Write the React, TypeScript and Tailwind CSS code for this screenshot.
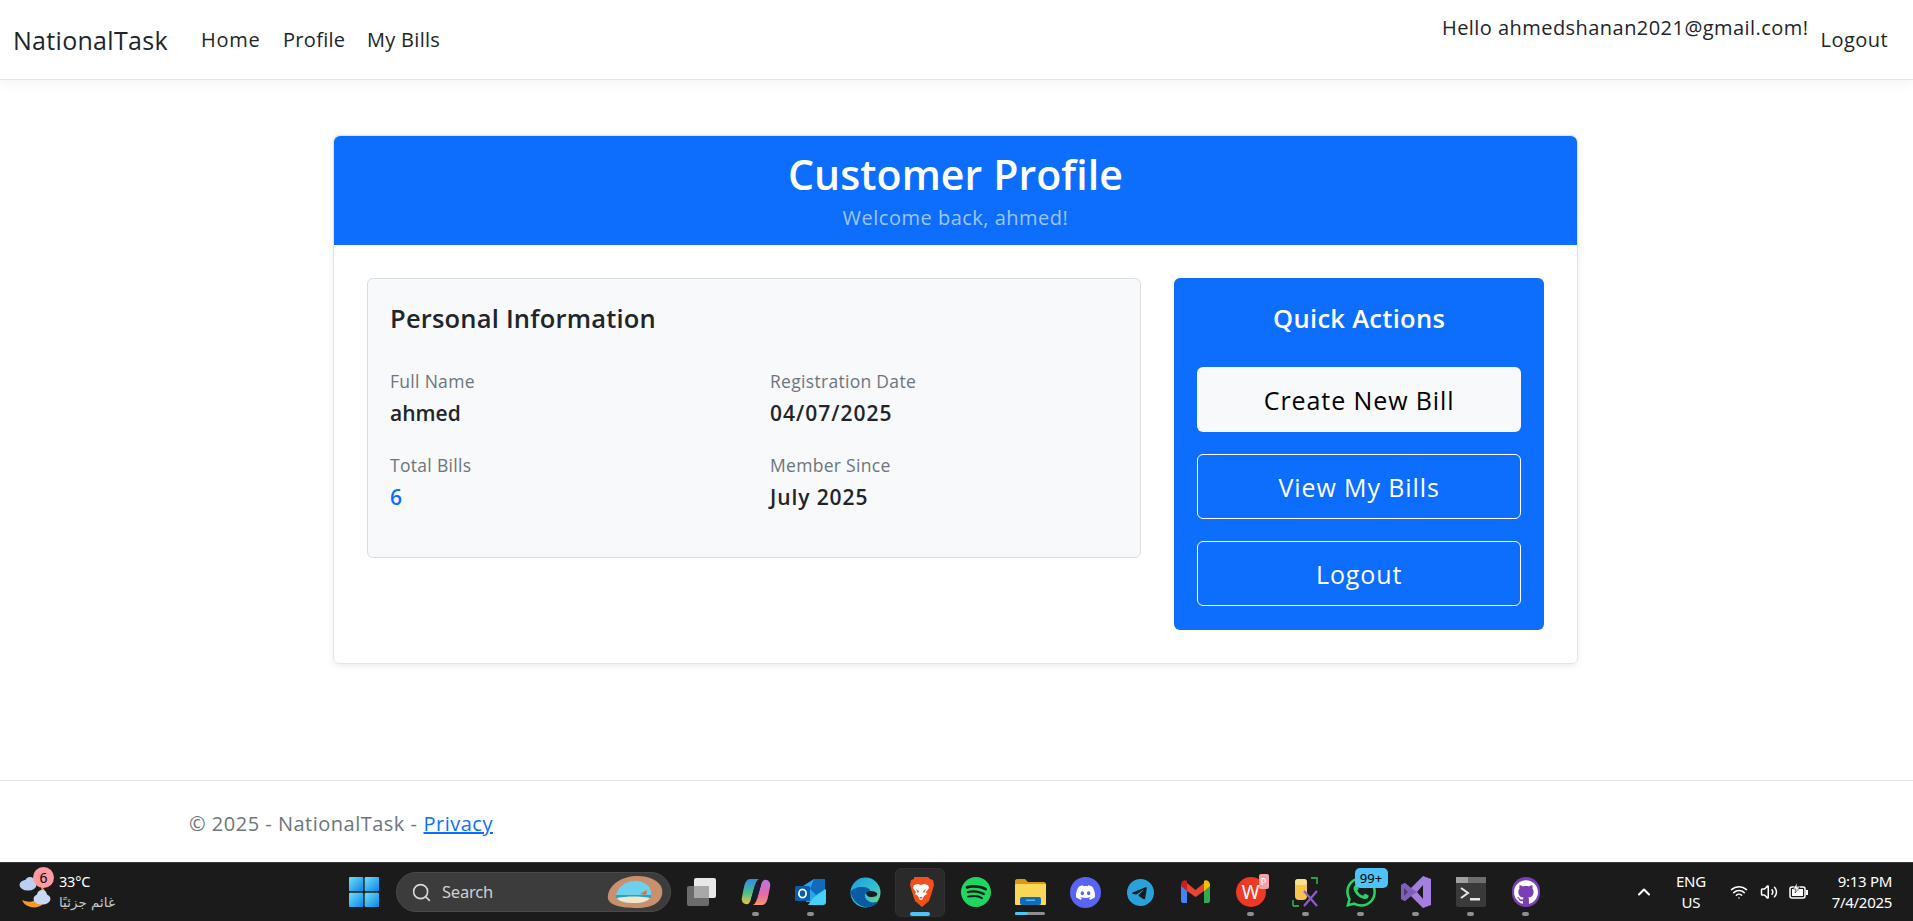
import { SiDiscord, SiGithub, SiSpotify, SiTelegram, SiWhatsapp } from "react-icons/si";
import { ChevronUp, Search, Volume2, Wifi } from "lucide-react";
import type { ReactNode } from "react";

function TaskIcon({ children, dot, active }: { children: ReactNode; dot?: boolean; active?: boolean }) {
  return (
    <div className="relative flex h-[49px] w-[55px] shrink-0 items-center justify-center">
      {active && <span className="absolute inset-y-0 left-[2px] w-[50px] rounded-md border border-[#303030] bg-[#2a2a2a]" />}
      <span className="relative flex items-center justify-center">{children}</span>
      {dot && <span className="absolute bottom-[1px] left-[24px] h-[4px] w-[7px] rounded-full bg-[#8f8f8f]" />}
      {active && <span className="absolute bottom-[1px] left-[17px] h-[4px] w-[20px] rounded-full bg-[#4fc3f7]" />}
    </div>
  );
}

function WindowsLogo() {
  return (
    <svg width="30" height="30" viewBox="0 0 30 30">
      <defs>
        <linearGradient id="win" x1="0" y1="0" x2="1" y2="1">
          <stop offset="0" stopColor="#6fe0f5" />
          <stop offset="1" stopColor="#0a84e8" />
        </linearGradient>
      </defs>
      <rect x="0" y="0" width="14.3" height="14.3" rx="1" fill="url(#win)" />
      <rect x="15.7" y="0" width="14.3" height="14.3" rx="1" fill="url(#win)" />
      <rect x="0" y="15.7" width="14.3" height="14.3" rx="1" fill="url(#win)" />
      <rect x="15.7" y="15.7" width="14.3" height="14.3" rx="1" fill="url(#win)" />
    </svg>
  );
}

function WeatherIcon() {
  return (
    <svg width="34" height="36" viewBox="0 0 34 36">
      <path d="M22 12c6 5 7 12 3 17-4 5-12 6-18 2-2-1-3-3-4-5 7 3 13 2 17-3 2-3 3-7 2-11z" fill="#f59a23" />
      <ellipse cx="9" cy="11" rx="8.500" ry="5.500" fill="#b9d0f2" />
      <circle cx="11" cy="8" r="5" fill="#b9d0f2" />
      <ellipse cx="23" cy="25" rx="8.500" ry="5.500" fill="#c7d9f5" />
      <circle cx="23" cy="21" r="5" fill="#c7d9f5" />
    </svg>
  );
}

function BeachImage() {
  return (
    <svg width="60" height="34" viewBox="0 0 60 34">
      <path d="M4 20C6 9 18 1 34 1c10 0 22 4 24 13 2 10-6 19-24 19C16 33 2 30 4 20z" fill="#c8906c" />
      <path d="M12 21C13 12 22 5 33 6c9 1 15 6 14 14-1 6-8 8-17 8-9 0-18-1-18-7z" fill="#6dd0ee" />
      <path d="M12 20h35v3H12z" fill="#27a3c4" />
      <path d="M13 23c10-2 24-2 33 0-3 4-9 5-16 5s-14-1-17-5z" fill="#f2e6c8" />
      <path d="M36 19l7-4-1 5z" fill="#e0703a" />
    </svg>
  );
}

function TaskView() {
  return (
    <svg width="30" height="30" viewBox="0 0 30 30">
      <rect x="8" y="1" width="22" height="20" rx="2" fill="#e8e8e8" />
      <rect x="1" y="9" width="22" height="20" rx="2" fill="#6b6b6b" />
      <rect x="8" y="9" width="15" height="12" fill="#a8a8a8" />
    </svg>
  );
}

function Copilot() {
  return (
    <svg width="30" height="28" viewBox="0 0 30 28">
      <defs>
        <linearGradient id="cpa" x1="0" y1="0" x2="0" y2="1">
          <stop offset="0" stopColor="#2f8bea" />
          <stop offset="0.55" stopColor="#4cc08a" />
          <stop offset="1" stopColor="#f5c33b" />
        </linearGradient>
        <linearGradient id="cpb" x1="0" y1="0" x2="0" y2="1">
          <stop offset="0" stopColor="#b675e8" />
          <stop offset="0.6" stopColor="#e86aa6" />
          <stop offset="1" stopColor="#f79a5c" />
        </linearGradient>
      </defs>
      <path d="M9 1h9c-2 1-3 3-4 6L10 21c-1 4-3 6-5 5-3 0-5-3-4-7l2-10c1-5 3-8 6-8z" fill="url(#cpa)" />
      <path d="M21 27h-9c2-1 3-3 4-6l4-14c1-4 3-6 5-5 3 0 5 3 4 7l-2 10c-1 5-3 8-6 8z" fill="url(#cpb)" />
      <path d="M14 7h6l-4 14h-6z" fill="#17203a" opacity="0.75" />
    </svg>
  );
}

function Outlook() {
  return (
    <svg width="31" height="28" viewBox="0 0 31 28">
      <path d="M8 8l11-7h11v19c0 2-1 4-4 4H11z" fill="#2aa6e8" />
      <path d="M19 1h11v10l-9 6-6-6z" fill="#0f6cbd" />
      <path d="M13 27h15c2 0 3-1 3-3V11L18 20z" fill="#47d2f5" />
      <rect x="0" y="8" width="15" height="15" rx="1.5" fill="#0a5cb0" />
      <ellipse cx="7.5" cy="15.5" rx="3.6" ry="4.2" fill="none" stroke="#fff" strokeWidth="1.8" />
    </svg>
  );
}

function Edge() {
  return (
    <svg width="31" height="31" viewBox="0 0 31 31">
      <defs>
        <linearGradient id="edgeTop" x1="0" y1="0" x2="1" y2="1">
          <stop offset="0" stopColor="#1b9de2" />
          <stop offset="0.6" stopColor="#35c1d0" />
          <stop offset="1" stopColor="#7ee05f" />
        </linearGradient>
      </defs>
      <circle cx="15.5" cy="15.5" r="15" fill="url(#edgeTop)" />
      <path d="M.5 15C2 22 8 30 17 30c5 0 9-2 12-6-4 2-9 2-12-1-2-2-3-5-1-7 1-1 3-1 5-1-1-4-5-5-9-5-5 0-10 2-11.500 5z" fill="#0c59a4" />
      <path d="M16 16c3-3 8-2 11 0 1 3-2 4-6 4-3 0-5-2-5-4z" fill="#1a1a1a" />
    </svg>
  );
}

function BraveLogo() {
  return (
    <svg width="26" height="30" viewBox="0 0 26 30">
      <path d="M6 0h14l2 2 3 1 1 5-2 7-3 9-7 6-7-6-3-9-2-7 1-5 3-1z" fill="#f1511b" />
      <path d="M6 8l4-1 3 1 3-1 4 1 1 3-3 4 1 2-3 2-2 4h-2l-2-4-3-2 1-2-3-4z" fill="#fff" />
      <path d="M8 12l3 2-1 2zM18 12l-3 2 1 2zM11 20h4l-2 2z" fill="#f1511b" />
    </svg>
  );
}

function Folder() {
  return (
    <svg width="31" height="28" viewBox="0 0 31 28">
      <path d="M0 3c0-1 1-2 2-2h8l3 3h16c1 0 2 1 2 2v3H0z" fill="#d99a12" />
      <rect x="0" y="6" width="31" height="21" rx="1" fill="#fbd757" />
      <rect x="5" y="19" width="21" height="8" rx="2" fill="#0f6cbd" />
      <rect x="11" y="21.500" width="9" height="1.500" fill="#5fb2ee" />
    </svg>
  );
}

function Gmail() {
  return (
    <svg width="29" height="24" viewBox="0 0 29 24">
      <path d="M0 4v17c0 1 1 2 2 2h4V10z" fill="#4285f4" />
      <path d="M29 4v17c0 1-1 2-2 2h-4V10z" fill="#34a853" />
      <path d="M6 3l8.500 7L23 3v8l-8.500 6L6 11z" fill="#ea4335" />
      <path d="M0 5c0-4 4-6 6-4v10L0 6z" fill="#c5221f" />
      <path d="M29 5c0-4-4-6-6-4v10l6-5z" fill="#fbbc04" />
    </svg>
  );
}

function Wps() {
  return (
    <div className="relative h-[30px] w-[30px]">
      <div className="flex h-[30px] w-[30px] items-center justify-center rounded-full bg-[#ee3a24] text-[19px] leading-none text-white">W</div>
      <span className="absolute right-[-3px] top-[-3px] h-[15px] w-[10px] rounded-[2px] bg-[#f2a0a8] text-center text-[9px] leading-[15px] text-white">P</span>
    </div>
  );
}

function DevTool() {
  return (
    <svg width="28" height="30" viewBox="0 0 28 30">
      <path d="M19 1h6v6M1 29V23M1 29h6" fill="none" stroke="#2e9e4a" strokeWidth="1.800" />
      <rect x="3" y="2" width="12" height="21" rx="4" fill="#f4c64e" />
      <rect x="3" y="2" width="12" height="6" rx="3" fill="#f9e08a" />
      <path d="M12 14l13 15M25 14L12 29" stroke="#8f5bd0" strokeWidth="2.200" />
    </svg>
  );
}

function VisualStudio() {
  return (
    <svg width="30" height="32" viewBox="0 0 30 32">
      <path d="M22 0l8 3v26l-8 3-12-12-6 5-4-2V9l4-2 6 5zM22 9l-6 7 6 7zM3 12v8l4-4z" fill="#a47fe0" />
      <path d="M10 12l6 4-6 4-6 5-4-2V9l4-2z" fill="#6a4ea8" opacity="0.65" />
    </svg>
  );
}

function Terminal() {
  return (
    <svg width="30" height="30" viewBox="0 0 30 30">
      <rect x="0" y="0" width="30" height="30" rx="2" fill="#3a3a3a" />
      <rect x="0" y="0" width="30" height="6" fill="#6e6e6e" />
      <rect x="0" y="0" width="12" height="6" fill="#a0a0a0" />
      <path d="M5 11l7 5-7 5" fill="none" stroke="#e8e8e8" strokeWidth="2" />
      <rect x="14" y="21" width="10" height="2.500" fill="#e8e8e8" />
    </svg>
  );
}

const labelClass = "text-[17.500px] leading-[28px] tracking-[0.3px] text-[#6c757d]";
const buttonText = "pt-[2px] text-[25px] tracking-[0.9px]";

export default function App() {
  return (
    <div className="flex h-[921px] w-[1913px] flex-col overflow-hidden bg-white font-['Open_Sans','Noto_Sans',sans-serif] text-[#212529]">
      {/* navbar */}
      <nav className="relative flex h-[80px] shrink-0 items-start justify-between border-b border-[#e3e3e3] pl-[13px] pr-[25px] shadow-[0_3px_12px_rgba(0,0,0,0.05)]">
        <div className="flex items-center pt-[22px]">
          <a className="w-[188px] text-[25px] leading-[36px] tracking-[0.3px] text-[#212529]">NationalTask</a>
          <ul className="flex text-[20px] leading-[36px] tracking-[0.3px]">
            <li className="w-[82px] tracking-[0.7px]">Home</li>
            <li className="w-[84px]">Profile</li>
            <li>My Bills</li>
          </ul>
        </div>
        <div className="flex items-start">
          <span className="pt-[10px] text-[20px] leading-[36px] tracking-[0.45px]">Hello ahmedshanan2021@gmail.com!</span>
          <span className="pl-[12px] pt-[22px] text-[20px] leading-[36px] tracking-[0.45px]">Logout</span>
        </div>
      </nav>

      {/* main */}
      <main className="flex-1 pl-[333px] pt-[55px]">
        <div className="h-[529px] w-[1245px] rounded-[6px] border border-[#e4e4e4] shadow-[0_2px_6px_rgba(0,0,0,0.08)]">
          <header className="flex h-[109px] flex-col items-center rounded-t-[6px] bg-[#0d6efd] pt-[10px] text-white">
            <h1 className="text-[41px] font-semibold leading-[56px] tracking-[0.1px]">Customer Profile</h1>
            <p className="pt-[3px] text-[20px] leading-[26px] tracking-[0.5px] text-[#9ec5fe]">Welcome back, ahmed!</p>
          </header>

          <div className="flex items-start gap-[33px] px-[33px] pt-[33px]">
            <section className="h-[280px] w-[775px] rounded-[6px] border border-[#dcdde0] bg-[#f8f9fa] px-[22px] pt-[20px]">
              <h2 className="text-[25.500px] font-semibold leading-[38px] tracking-[0.2px] text-[#212529]">Personal Information</h2>
              <div className="mt-[30px] grid grid-cols-[380px_1fr] gap-y-[20px]">
                <div>
                  <div className={labelClass}>Full Name</div>
                  <div className="text-[21px] font-semibold leading-[36px]">ahmed</div>
                </div>
                <div>
                  <div className={labelClass}>Registration Date</div>
                  <div className="text-[21px] font-semibold leading-[36px] tracking-[1px]">04/07/2025</div>
                </div>
                <div>
                  <div className={labelClass}>Total Bills</div>
                  <div className="text-[21px] font-semibold leading-[36px] text-[#0d6efd]">6</div>
                </div>
                <div>
                  <div className={labelClass}>Member Since</div>
                  <div className="text-[21px] font-semibold leading-[36px] tracking-[0.9px]">July 2025</div>
                </div>
              </div>
            </section>

            <aside className="flex h-[352px] w-[370px] flex-col gap-[22px] rounded-[6px] bg-[#0d6efd] px-[23px] pt-[21px] text-white">
              <h2 className="mb-[8px] text-center text-[25.500px] font-semibold leading-[38px] tracking-[0.3px]">Quick Actions</h2>
              <button className={`h-[65px] rounded-[6px] bg-[#f8f9fa] ${buttonText} text-black`}>Create New Bill</button>
              <button className={`h-[65px] rounded-[6px] border border-white ${buttonText} text-white`}>View My Bills</button>
              <button className={`h-[65px] rounded-[6px] border border-white ${buttonText} text-white`}>Logout</button>
            </aside>
          </div>
        </div>
      </main>

      {/* footer */}
      <footer className="flex h-[82px] shrink-0 items-start border-t border-[#e3e3e3] pl-[189px] pt-[28px] text-[20px] leading-[30px] tracking-[0.5px] text-[#6c757d]">
        <span>© 2025 - NationalTask - </span>
        <a className="ml-[6px] text-[#0d6efd] underline">Privacy</a>
      </footer>

      {/* windows taskbar */}
      <div className="flex h-[59px] shrink-0 items-center border-t border-[#3a3a3a] bg-[#1b1b1b] font-['Noto_Sans','DejaVu_Sans',sans-serif] text-white">
        <div className="relative flex w-[336px] shrink-0 items-center pl-[19px]">
          <WeatherIcon />
          <span className="absolute left-[33px] top-[-4px] flex h-[21px] w-[21px] items-center justify-center rounded-full bg-[#ff9aa2] text-[14px] text-black">6</span>
          <div className="ml-[6px] flex flex-col text-[14.500px] leading-[21px]">
            <span className="tracking-[-0.2px]">33°C</span>
            <span className="font-['DejaVu_Sans',sans-serif] text-[13.500px] text-[#c8c8c8]" dir="rtl">غائم جزئيًا</span>
          </div>
        </div>
        <div className="flex w-[55px] shrink-0 items-center justify-center">
          <WindowsLogo />
        </div>
        <div className="ml-[5px] mr-[2px] flex h-[40px] w-[275px] shrink-0 items-center rounded-full border border-[#4a4a4a] bg-[#3c3c3c] pl-[14px] pr-[6px]">
          <Search size={21} strokeWidth={1.8} className="text-[#d8d8d8]" />
          <span className="ml-[10px] flex-1 text-[16.500px] tracking-[-0.2px] text-[#d0d0d0]">Search</span>
          <BeachImage />
        </div>
        <TaskIcon><TaskView /></TaskIcon>
        <TaskIcon dot><Copilot /></TaskIcon>
        <TaskIcon dot><Outlook /></TaskIcon>
        <TaskIcon><Edge /></TaskIcon>
        <TaskIcon active><BraveLogo /></TaskIcon>
        <TaskIcon><SiSpotify size={30} className="text-[#1ed760]" /></TaskIcon>
        <TaskIcon>
          <Folder />
          <span className="absolute bottom-[-9px] left-[0px] h-[3px] w-[30px] rounded-full bg-[#8f8f8f]" />
          <span className="absolute bottom-[-9px] left-[0px] h-[3px] w-[13px] rounded-full bg-[#4fc3f7]" />
        </TaskIcon>
        <TaskIcon><div className="flex h-[31px] w-[31px] items-center justify-center rounded-full bg-[#5865f2]"><SiDiscord size={19} className="text-white" /></div></TaskIcon>
        <TaskIcon><SiTelegram size={27} className="text-[#2aa1da]" /></TaskIcon>
        <TaskIcon><Gmail /></TaskIcon>
        <TaskIcon dot><Wps /></TaskIcon>
        <TaskIcon dot><DevTool /></TaskIcon>
        <TaskIcon dot>
          <SiWhatsapp size={30} className="text-[#25d366]" />
          <span className="absolute left-[9px] top-[-9px] h-[20px] w-[33px] rounded-[5px] bg-[#4fc3f7] text-center text-[13px] leading-[20px] text-black">99+</span>
        </TaskIcon>
        <TaskIcon dot><VisualStudio /></TaskIcon>
        <TaskIcon dot><Terminal /></TaskIcon>
        <TaskIcon dot>
          <div className="flex h-[30px] w-[28px] items-center justify-center rounded-full bg-[#7b3fb5]"><SiGithub size={24} className="text-white" /></div>
        </TaskIcon>

        <div className="ml-[81px] flex items-center">
          <ChevronUp size={20} strokeWidth={2.500} />
          <div className="ml-[19px] w-[36px] text-center text-[15px] leading-[21px] tracking-[-0.2px]">ENG<br />US</div>
          <Wifi size={18} className="ml-[21px]" />
          <Volume2 size={18} className="ml-[12px]" />
          <svg width="20" height="18" viewBox="0 0 20 18" className="ml-[11px]">
            <rect x="1" y="4" width="15" height="11" rx="2" fill="none" stroke="#fff" strokeWidth="1.500" />
            <rect x="3" y="6" width="11" height="7" fill="#fff" />
            <rect x="17" y="7" width="2" height="5" fill="#fff" />
            <path d="M8 0L4 6h3l-1 4 5-6H8z" fill="#fff" stroke="#1b1b1b" strokeWidth="0.600" />
          </svg>
          <div className="ml-[20px] w-[63px] text-right text-[15px] leading-[21px] tracking-[-0.3px]">9:13 PM<br />7/4/2025</div>
        </div>
      </div>
    </div>
  );
}
